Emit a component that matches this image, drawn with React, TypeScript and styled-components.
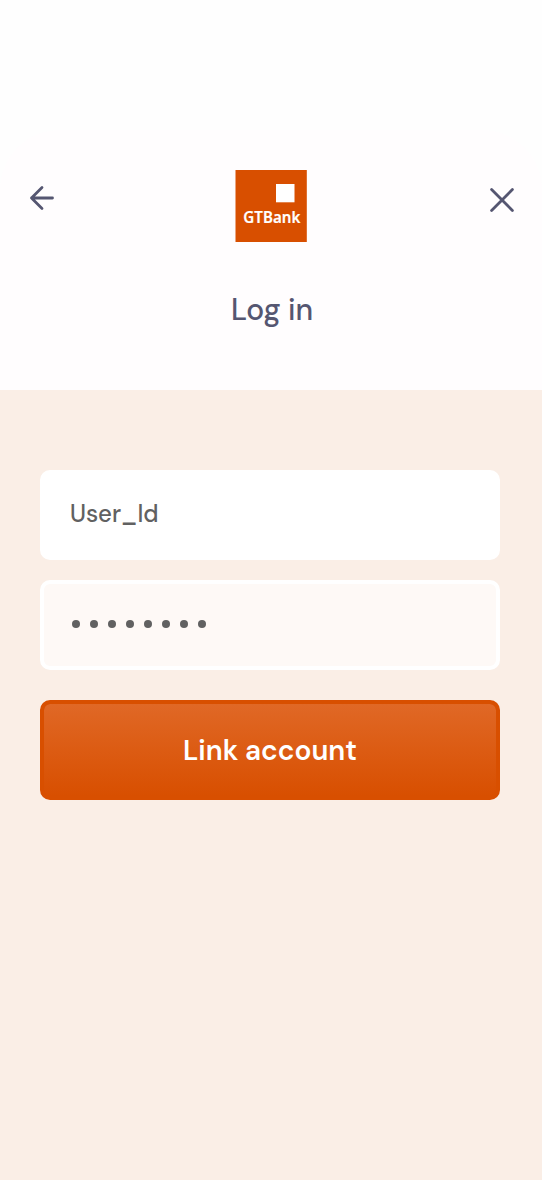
import React from "react";
import styled, { createGlobalStyle } from "styled-components";

const GlobalStyle = createGlobalStyle`
  * { box-sizing: border-box; }
  body { margin: 0; background: #fff; }
`;

const Screen = styled.main`
  width: 542px;
  height: 1180px;
  padding-top: 130px;
  display: flex;
  flex-direction: column;
  overflow: hidden;
  background: #fefefe;
  font-family: "DM Sans", Inter, sans-serif;
`;

const Header = styled.header`
  height: 260px;
  flex: none;
  padding: 40px 28px 0;
  border-radius: 60px 60px 0 0;
  background: #fffdfe;
`;

const TopBar = styled.div`
  display: flex;
  justify-content: space-between;
  align-items: flex-start;
`;

const IconButton = styled.button<{ $drop: number }>`
  width: 28px;
  height: 28px;
  margin-top: ${(p) => p.$drop}px;
  padding: 0;
  border: 0;
  background: none;
  color: #555671;

  svg { display: block; overflow: visible; }
`;

const Logo = styled.svg`
  display: block;
  width: 72px;
  height: 72px;
`;

const LogoText = styled.text`
  font: 600 15.5px "Noto Sans", "Open Sans", sans-serif;
  fill: #fff;
  stroke: #fff;
  stroke-width: 0.2px;
`;

const Title = styled.h1`
  margin: 47px 0 0;
  padding-left: 2px;
  display: flex;
  justify-content: center;
  color: #555671;
  font: 500 30px/42px "DM Sans", "Open Sans", sans-serif;
  letter-spacing: -0.1px;
`;

const Form = styled.form`
  flex: 1;
  padding: 80px 42px 0 40px;
  display: flex;
  flex-direction: column;
  background: #faeee6;
`;

const Field = styled.div<{ $muted?: boolean }>`
  height: 90px;
  margin-bottom: ${(p) => (p.$muted ? 30 : 20)}px;
  padding: 0 26px;
  display: flex;
  align-items: center;
  border: 4px solid #fff;
  border-radius: 10px;
  background: ${(p) => (p.$muted ? "#fef9f6" : "#fff")};
`;

const UserId = styled.span`
  padding-bottom: 2px;
  color: #616161;
  font-size: 24px;
  font-weight: 500;
  line-height: 30px;
  letter-spacing: -0.05px;
`;

const Dots = styled.div`
  display: flex;
  gap: 10px;
  padding: 0 2px 2px;
`;

const Dot = styled.i`
  width: 8px;
  height: 8px;
  border-radius: 50%;
  background: #616161;
`;

const Submit = styled.button`
  height: 100px;
  padding: 1px 0 0;
  border: 4px solid #d84f00;
  border-radius: 10px;
  background: linear-gradient(#e06826, #d84f00) padding-box, #d84f00;
  color: #fff;
  font: 600 28px/36px "DM Sans", Inter, sans-serif;
`;

export default function App() {
  return (
    <>
      <GlobalStyle />
      <Screen>
        <Header>
          <TopBar>
            <IconButton $drop={14} aria-label="Back">
              <svg width="28" height="28" fill="none" stroke="currentColor" strokeWidth="2.8" strokeLinecap="round" strokeLinejoin="round">
                <path d="M24.5 14H3.5M14 3.5L3.5 14L14 24.5" />
              </svg>
            </IconButton>
            <Logo viewBox="0 0 72 72">
              <rect x="0.5" width="71.3" height="72" fill="#d84f00" />
              <rect x="41" y="14" width="18.5" height="18.3" fill="#fff" />
              <LogoText x="8.3" y="53" textLength="57" lengthAdjust="spacingAndGlyphs">GTBank</LogoText>
            </Logo>
            <IconButton $drop={16} aria-label="Close">
              <svg width="28" height="28" fill="none" stroke="currentColor" strokeWidth="2.8" strokeLinecap="round">
                <path d="M5.6 3.6L26.4 24.4M26.4 3.6L5.6 24.4" />
              </svg>
            </IconButton>
          </TopBar>
          <Title>Log in</Title>
        </Header>
        <Form>
          <Field>
            <UserId>User_Id</UserId>
          </Field>
          <Field $muted>
            <Dots>
              {Array.from({ length: 8 }, (_, i) => (
                <Dot key={i} />
              ))}
            </Dots>
          </Field>
          <Submit type="button">Link account</Submit>
        </Form>
      </Screen>
    </>
  );
}
